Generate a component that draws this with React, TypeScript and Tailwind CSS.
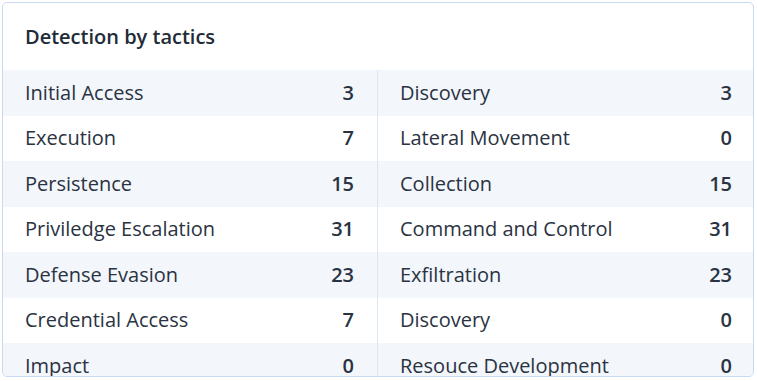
import React from 'react';

type Tactic = { name: string; count: number };

const leftTactics: Tactic[] = [
  { name: 'Initial Access', count: 3 },
  { name: 'Execution', count: 7 },
  { name: 'Persistence', count: 15 },
  { name: 'Priviledge Escalation', count: 31 },
  { name: 'Defense Evasion', count: 23 },
  { name: 'Credential Access', count: 7 },
  { name: 'Impact', count: 0 },
];

const rightTactics: Tactic[] = [
  { name: 'Discovery', count: 3 },
  { name: 'Lateral Movement', count: 0 },
  { name: 'Collection', count: 15 },
  { name: 'Command and Control', count: 31 },
  { name: 'Exfiltration', count: 23 },
  { name: 'Discovery', count: 0 },
  { name: 'Resouce Development', count: 0 },
];

const Column: React.FC<{ items: Tactic[]; side: 'left' | 'right' }> = ({ items, side }) => (
  <div className={side === 'left' ? 'flex flex-col border-r border-[#dbe6f4]' : 'flex flex-col'}>
    {items.map((t, i) => (
      <div
        key={t.name + i}
        className={`flex items-center justify-between h-[45.5px] shrink-0 ${
          side === 'left' ? 'pl-[22px] pr-[23px]' : 'pl-[22px] pr-[21px]'
        } ${i % 2 === 0 ? 'bg-[#f3f6fb]' : 'bg-white'}`}
      >
        <span className="text-[20px] text-[#2a3342]">{t.name}</span>
        <span className="text-[20px] font-semibold text-[#2a3342]">{t.count}</span>
      </div>
    ))}
  </div>
);

export default function App() {
  return (
    <div className="w-[757px] h-[381px] bg-white pt-[2px] pl-[2px] font-['Open_Sans',sans-serif]">
      <div className="w-[752px] h-[375px] border border-[#c8daf2] rounded-[5px] overflow-hidden bg-white flex flex-col">
        <div className="h-[67px] shrink-0 flex items-center px-[22px]">
          <h2 className="text-[20px] font-semibold text-[#222b38]">Detection by tactics</h2>
        </div>
        <div className="grid grid-cols-2">
          <Column items={leftTactics} side="left" />
          <Column items={rightTactics} side="right" />
        </div>
      </div>
    </div>
  );
}
